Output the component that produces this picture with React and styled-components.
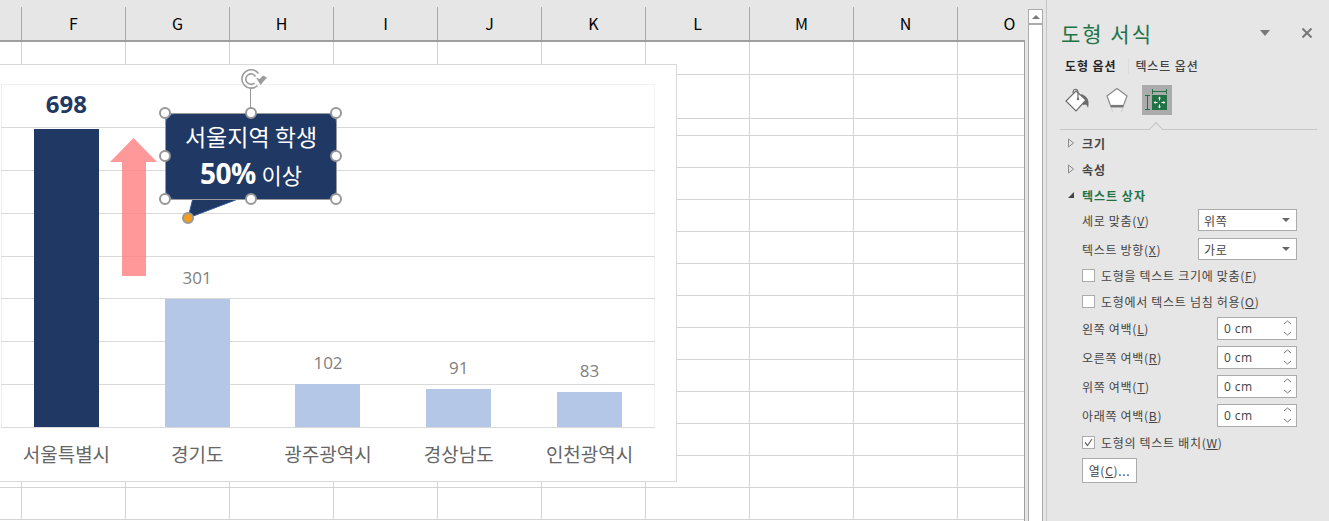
import React from "react";
import styled, { createGlobalStyle } from "styled-components";

const KR = `"Noto Sans CJK KR", "Noto Sans", sans-serif`;

const Global = createGlobalStyle`
  html, body { margin: 0; padding: 0; background: #e6e6e6; overflow: hidden; }
  * { box-sizing: border-box; }
`;

const Page = styled.div`
  display: flex; width: 1329px; height: 521px; overflow: hidden;
  font-family: ${KR}; background: #e6e6e6;
`;

/* ---------- sheet ---------- */
const Sheet = styled.div`
  position: relative; width: 1025px; height: 521px; flex: none; overflow: hidden;
`;
const HeaderRow = styled.div`
  display: flex; height: 42px; border-bottom: 2px solid #9f9f9f; margin-left: -82px; padding-top: 7px;
`;
const HeaderCell = styled.div`
  flex: none; width: 104px; height: 33px; display: flex; align-items: center; justify-content: center;
  border-right: 1px solid #a8a8a8; font-size: 16px; color: #000; padding-bottom: 2px;
`;
const Grid = styled.div`
  background: #fff; border-right: 1px solid #9f9f9f; overflow: hidden; height: 479px;
`;
const Row = styled.div`
  display: flex; height: ${p => p.$h}px; margin-left: -82px; border-bottom: 1px solid #d4d4d4;
`;
const Cell = styled.div`
  flex: none; width: 104px; border-right: 1px solid #d4d4d4;
`;

/* ---------- chart ---------- */
const Chart = styled.div`
  position: absolute; left: -2px; top: 64px; width: 679px; height: 418px;
  background: #fff; border: 1px solid #d9d9d9; padding: 19px 0 0 2px;
  display: flex; flex-direction: column;
`;
const Plot = styled.div`
  position: relative; width: 654px; height: 344px; flex: none; display: grid; grid-template-columns: repeat(5, 1fr);
  padding-bottom: 1px; box-shadow: inset 1px 0 #eeeeee, inset -1px 0 #f2f2f2;
`;
const GridLines = styled.div`
  position: absolute; inset: 0; display: grid; grid-template-rows: repeat(8, 1fr);
  border-bottom: 1px solid #d9d9d9;
`;
const GridLine = styled.div`
  border-top: 1px solid ${p => (p.$first ? "#f0f0f0" : "#d9d9d9")};
`;
const BarColumn = styled.div`
  position: relative; display: flex; flex-direction: column; align-items: center; justify-content: flex-end;
`;
const Value = styled.div`
  font-size: ${p => (p.$top ? 24 : 17)}px; line-height: ${p => (p.$top ? 30 : 22)}px;
  font-weight: ${p => (p.$top ? 700 : 400)}; color: ${p => (p.$top ? "#1f3864" : "#7f7f7f")};
  margin-bottom: 10px; font-family: "Open Sans", sans-serif;
`;
const Bar = styled.div`
  width: 65px; background: ${p => (p.$top ? "#1f3864" : "#b4c7e7")};
`;
const Axis = styled.div`
  display: grid; grid-template-columns: repeat(5, 1fr); width: 654px; padding-top: 14px;
`;
const AxisLabel = styled.div`
  text-align: center; font-size: 19px; line-height: 24px; color: #666;
`;

/* ---------- shapes over the chart ---------- */
const Arrow = styled.svg`
  position: absolute; left: 110px; top: 138px;
`;
const Callout = styled.div`
  position: absolute; left: 165px; top: 113px; width: 172px; height: 87px;
  background: #1f3864; border: 1px solid #2f5597; border-radius: 11px;
  display: flex; flex-direction: column; align-items: center; padding-top: 6px; color: #fff;
`;
const Tail = styled.svg`
  position: absolute; left: 180px; top: 196px;
`;
const Frame = styled.div`
  position: absolute; left: 165px; top: 113px; width: 172px; height: 87px; border: 1px solid #9a9a9a;
`;
const CalloutLine = styled.div`
  font-size: 23px; line-height: 32px; height: 32px; white-space: nowrap;
`;
const CalloutLineTwo = styled(CalloutLine)`
  margin-top: 5px; font-size: 22px;
`;
const Strong = styled.b`
  font-family: "Open Sans", sans-serif; font-size: 28px; font-weight: 700; letter-spacing: -.5px; margin-right: 1px;
`;
const Handle = styled.span`
  position: absolute; left: ${p => p.$x - 6}px; top: ${p => p.$y - 6}px; width: 12px; height: 12px;
  border-radius: 50%; background: #fff; border: 2px solid #979797;
`;
const OrangeHandle = styled(Handle)`
  background: #f59d1c;
`;
const Stem = styled.span`
  position: absolute; left: 250px; top: 88px; width: 1px; height: 25px; background: #979797;
`;
const Rotate = styled.svg`
  position: absolute; left: 239px; top: 67px;
`;

/* ---------- scrollbar ---------- */
const ScrollGap = styled.div`
  width: 3px; flex: none;
`;
const Scroll = styled.div`
  width: 15px; flex: none; margin-top: 9px; background: #fff; border: 1px solid #ababab; border-bottom: 0;
  display: flex; flex-direction: column;
`;
const ScrollUp = styled.div`
  height: 15px; border-bottom: 2px solid #ababab; display: flex; align-items: center; justify-content: center;
`;
const UpTri = styled.span`
  width: 0; height: 0; border-left: 4px solid transparent; border-right: 4px solid transparent; border-bottom: 4px solid #7a7a7a;
`;

/* ---------- panel ---------- */
const Panel = styled.div`
  flex: none; width: 283px; margin-left: 3px; border-left: 1px solid #c6c6c6;
  padding: 18px 0 0 13px; color: #444; font-size: 12px; background: #e6e6e6;
`;
const TitleRow = styled.div`
  display: flex; align-items: center; height: 30px; padding-right: 17px;
`;
const Title = styled.div`
  flex: 1; font-size: 21px; letter-spacing: 2px; color: #217346; line-height: 30px; padding-left: 1px;
`;
const PaneBtn = styled.svg`
  flex: none; margin-left: ${p => p.$ml || 0}px;
`;
const Tabs = styled.div`
  display: flex; align-items: center; height: 20px; margin-top: 8px; padding-left: 5px;
`;
const Tab = styled.div`
  font-size: 12px; letter-spacing: .9px; line-height: 20px; font-weight: ${p => (p.$on ? 700 : 500)};
  color: ${p => (p.$on ? "#262626" : "#444")};
  &:first-child { border-right: 1px solid #dcdcdc; height: 16px; line-height: 16px; padding-right: 12px; margin-right: 6px; }
`;
const IconRow = styled.div`
  display: flex; align-items: center; height: 30px; margin-top: 9px; padding-left: 2px; gap: 10px;
`;
const IconBox = styled.div`
  width: 30px; height: 30px; display: flex; align-items: center; justify-content: center;
  background: ${p => (p.$on ? "#ababab" : "transparent")};
`;
const Divider = styled.div`
  position: relative; margin-top: 14px; margin-bottom: 1px; width: 257px; height: 1px; background: #c6c6c6;
  &::after {
    content: ""; position: absolute; left: 91px; top: -5px; width: 9px; height: 9px;
    background: #e6e6e6; border-left: 1px solid #c6c6c6; border-top: 1px solid #c6c6c6; transform: rotate(45deg);
  }
`;
const Section = styled.div`
  display: flex; align-items: center; height: 26px; padding: 0 0 2px 7px; gap: 7px;
  font-size: 12px; font-weight: 700; letter-spacing: 1px;
  color: ${p => (p.$open ? "#217346" : "#444")};
`;
const Form = styled.div`
  display: flex; flex-direction: column; padding-left: 22px; width: 237px;
`;
const Stack = styled.div`
  display: flex; flex-direction: column; gap: ${p => p.$gap || 0}px; margin-bottom: ${p => p.$mb || 0}px;
`;
const Field = styled.div`
  display: flex; align-items: center; justify-content: space-between; height: 22px; color: #444;
`;
const FieldLabel = styled.span`
  letter-spacing: .7px; white-space: nowrap;
`;
const Select = styled.div`
  width: 99px; height: 22px; background: #fff; border: 1px solid #ababab; display: flex; align-items: center;
  justify-content: space-between; padding: 0 6px 0 5px; letter-spacing: .7px;
`;
const Caret = styled.span`
  width: 0; height: 0; border-left: 4px solid transparent; border-right: 4px solid transparent; border-top: 4px solid #666;
`;
const Spin = styled.div`
  flex: none; width: 80px; height: 23px; background: #fff; border: 1px solid #ababab; display: flex; align-items: center;
  justify-content: space-between; padding: 0 4px 0 6px;
`;
const SpinValue = styled.span`
  font-family: "Open Sans", sans-serif; font-size: 12px; letter-spacing: .4px; color: #444;
`;
const CheckRow = styled.div`
  display: flex; align-items: center; height: 26px; gap: 6px; color: #444; white-space: nowrap;
`;
const Box = styled.span`
  width: 13px; height: 13px; flex: none; background: #fff; border: 1px solid #ababab;
  display: flex; align-items: center; justify-content: center;
`;
const Button = styled.div`
  margin-top: 3px; width: 55px; height: 25px; background: #fff; border: 1px solid #ababab;
  display: flex; align-items: center; justify-content: center; color: #444;
`;

const Label = ({ t, k }) => <FieldLabel>{t}(<u>{k}</u>)</FieldLabel>;

const data = [
  { name: "서울특별시", v: 698, h: 298, top: true },
  { name: "경기도", v: 301, h: 128 },
  { name: "광주광역시", v: 102, h: 43 },
  { name: "경상남도", v: 91, h: 38 },
  { name: "인천광역시", v: 83, h: 35 },
];
const cols = ["E", "F", "G", "H", "I", "J", "K", "L", "M", "N", "O"];
const rows = [33, 44, 17, 32, 32, 32, 32, 32, 32, 32, 32, 32, 32, 32, 32];

const handles = [
  [165, 113], [251, 113], [336, 113], [165, 156], [336, 156], [165, 199], [251, 199], [336, 199],
];

const Spinner = () => (
  <svg width="9" height="18" viewBox="0 0 9 18" fill="none" stroke="#777" strokeWidth="1">
    <path d="M1 5 L4.5 2 L8 5" />
    <path d="M1 13 L4.5 16 L8 13" />
  </svg>
);
const Tri = ({ open }) => (
  <svg width="8" height="10" viewBox="0 0 8 10">
    {open
      ? <path d="M1 8 L7 8 L7 2 Z" fill="#444" />
      : <path d="M1.5 1 L6.5 5 L1.5 9 Z" fill="none" stroke="#8a8a8a" />}
  </svg>
);

const margins = [["왼쪽 여백", "L"], ["오른쪽 여백", "R"], ["위쪽 여백", "T"], ["아래쪽 여백", "B"]];

export default function App() {
  return (
    <Page>
      <Global />
      <Sheet>
        <HeaderRow>
          {cols.map((c, i) => <HeaderCell key={c}>{i === 0 ? "" : c}</HeaderCell>)}
        </HeaderRow>
        <Grid>
          {rows.map((h, i) => (
            <Row key={i} $h={h}>
              {cols.map(c => <Cell key={c} />)}
            </Row>
          ))}
        </Grid>

        <Chart>
          <Plot>
            <GridLines>
              {[0, 1, 2, 3, 4, 5, 6, 7].map(i => <GridLine key={i} $first={i === 0} />)}
            </GridLines>
            {data.map(d => (
              <BarColumn key={d.name}>
                <Value $top={d.top}>{d.v}</Value>
                <Bar $top={d.top} style={{ height: d.h }} />
              </BarColumn>
            ))}
          </Plot>
          <Axis>
            {data.map(d => <AxisLabel key={d.name}>{d.name}</AxisLabel>)}
          </Axis>
        </Chart>

        <Arrow width="47" height="138" viewBox="0 0 47 138">
          <path d="M23.5 0 L47 24 L36 24 L36 138 L12 138 L12 24 L0 24 Z" fill="#ff7f7f" fillOpacity=".8" />
        </Arrow>

        <Stem />
        <Rotate width="30" height="24" viewBox="0 0 30 24" fill="none" stroke="#9c9c9c" strokeWidth="1.6">
          <path d="M19.5 6.5 A9.2 9.2 0 1 0 18.5 18.5" />
          <path d="M16.5 9.5 A5.2 5.2 0 1 0 15.5 16" />
          <path d="M17 10.5 L20.5 12 L24 8.5 L28 10.5 L21.5 18 Z" fill="#9c9c9c" stroke="none" />
        </Rotate>

        <Tail width="64" height="26" viewBox="0 0 64 26">
          <path d="M13 2 L8 22 L58 3 Z" fill="#1f3864" stroke="#2f5597" strokeWidth="1" />
        </Tail>
        <Callout>
          <CalloutLine>서울지역 학생</CalloutLine>
          <CalloutLineTwo><Strong>50%</Strong> 이상</CalloutLineTwo>
        </Callout>
        <Frame />
        {handles.map(([x, y]) => <Handle key={`${x}-${y}`} $x={x} $y={y} />)}
        <OrangeHandle $x={188} $y={218} />
      </Sheet>

      <ScrollGap />
      <Scroll>
        <ScrollUp><UpTri /></ScrollUp>
      </Scroll>

      <Panel>
        <TitleRow>
          <Title>도형 서식</Title>
          <PaneBtn width="10" height="6" viewBox="0 0 10 6"><path d="M0 0 L10 0 L5 6 Z" fill="#777" /></PaneBtn>
          <PaneBtn $ml={32} width="10" height="10" viewBox="0 0 10 10" stroke="#777" strokeWidth="2">
            <path d="M0.5 0.5 L9.5 9.5 M9.5 0.5 L0.5 9.5" />
          </PaneBtn>
        </TitleRow>
        <Tabs>
          <Tab $on>도형 옵션</Tab>
          <Tab>텍스트 옵션</Tab>
        </Tabs>
        <IconRow>
          <IconBox>
            <svg width="28" height="26" viewBox="0 0 28 26" fill="none">
              <path d="M18 7 C24 9 27 13 25 21 C24 17 22 17 20 18 Z" fill="#6b6b6b" />
              <path d="M13 4 L23 13 L13 24 L3 14 Z" fill="#fff" stroke="#6b6b6b" strokeWidth="1.2" />
              <path d="M10 6 C10 1 15 1 15 6 L15 11" stroke="#6b6b6b" strokeWidth="1.2" />
              <circle cx="15" cy="12" r="1.2" fill="#6b6b6b" />
            </svg>
          </IconBox>
          <IconBox>
            <svg width="24" height="26" viewBox="0 0 24 26" fill="none">
              <path d="M12 1.5 L22 9 L18 20 L6 20 L2 9 Z" fill="#fff" stroke="#8a8a8a" strokeWidth="1.2" />
              <path d="M6 19 L18 19" stroke="#777" strokeWidth="2.2" />
              <path d="M6.5 21 L7.5 25 M17.5 21 L16.5 25" stroke="#cfcfcf" strokeWidth="1" />
            </svg>
          </IconBox>
          <IconBox $on>
            <svg width="30" height="30" viewBox="0 0 30 30" fill="none">
              <rect x="10" y="10" width="15" height="15" fill="#217346" />
              <path d="M10 6.5 L25 6.5 M10.5 4 L10.5 9 M24.5 4 L24.5 9" stroke="#217346" />
              <path d="M5.5 10 L5.5 25 M3 10.5 L8 10.5 M3 24.5 L8 24.5" stroke="#217346" />
              <path d="M17.5 12.5 L17.5 15.5 M17.5 19.5 L17.5 22.5 M12.5 17.5 L15.5 17.5 M19.5 17.5 L22.5 17.5" stroke="#fff" />
              <path d="M17.5 11.5 L19 13.5 L16 13.5 Z M17.5 23.5 L19 21.5 L16 21.5 Z M11.5 17.5 L13.5 16 L13.5 19 Z M23.5 17.5 L21.5 16 L21.5 19 Z" fill="#fff" />
            </svg>
          </IconBox>
        </IconRow>
        <Divider />
        <Section><Tri />크기</Section>
        <Section><Tri />속성</Section>
        <Section $open><Tri open />텍스트 상자</Section>
        <Form>
          <Stack $gap={7} $mb={2}>
            <Field><Label t="세로 맞춤" k="V" /><Select>위쪽<Caret /></Select></Field>
            <Field><Label t="텍스트 방향" k="X" /><Select>가로<Caret /></Select></Field>
          </Stack>
          <Stack $mb={3}>
            <CheckRow><Box /><Label t="도형을 텍스트 크기에 맞춤" k="F" /></CheckRow>
            <CheckRow><Box /><Label t="도형에서 텍스트 넘침 허용" k="O" /></CheckRow>
          </Stack>
          <Stack $gap={7} $mb={3}>
            {margins.map(([t, k]) => (
              <Field key={k}><Label t={t} k={k} /><Spin><SpinValue>0 cm</SpinValue><Spinner /></Spin></Field>
            ))}
          </Stack>
          <CheckRow>
            <Box>
              <svg width="11" height="11" viewBox="0 0 11 11" fill="none" stroke="#666" strokeWidth="1.2">
                <path d="M2 5.5 L4.5 8.5 L9 2" />
              </svg>
            </Box>
            <Label t="도형의 텍스트 배치" k="W" />
          </CheckRow>
          <Button><FieldLabel>열(<u>C</u>)...</FieldLabel></Button>
        </Form>
      </Panel>
    </Page>
  );
}
